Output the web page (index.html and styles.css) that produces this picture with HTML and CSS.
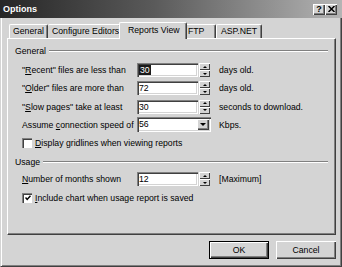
FILE: index.html
```html
<!DOCTYPE html>
<html>
<head>
<meta charset="utf-8">
<title>Options</title>
<link rel="stylesheet" href="styles.css">
</head>
<body>
<div class="window">
  <div class="titlebar">
    <span class="title">Options</span>
    <div class="caption-btns">
      <span class="cbtn cbtn-help">?</span>
      <span class="cbtn"><svg width="7" height="6" viewBox="0 0 7 6"><path d="M0.5 0 L6.5 6 M6.5 0 L0.5 6" stroke="#000" stroke-width="1.5"/></svg></span>
    </div>
  </div>
  <div class="frame">
    <div class="tabs">
      <div class="tab tab-general">General</div>
      <div class="tab tab-editors">Configure Editors</div>
      <div class="tab tab-reports active">Reports View</div>
      <div class="tab tab-ftp">FTP</div>
      <div class="tab tab-asp">ASP.NET</div>
    </div>
    <div class="panel">
      <div class="group-head"><span>General</span><span class="rule"></span></div>
      <div class="group-body">
        <div class="row">
          <span class="lbl">&quot;<u>R</u>ecent&quot; files are less than</span>
          <div class="field">
            <div class="edit"><span class="sel">30</span></div>
            <div class="spin"><span class="spin-btn"><i class="tri-up"></i></span><span class="spin-btn"><i class="tri-down"></i></span></div>
          </div>
          <span class="unit">days old.</span>
        </div>
        <div class="row">
          <span class="lbl">&quot;<u>O</u>lder&quot; files are more than</span>
          <div class="field">
            <div class="edit">72</div>
            <div class="spin"><span class="spin-btn"><i class="tri-up"></i></span><span class="spin-btn"><i class="tri-down"></i></span></div>
          </div>
          <span class="unit">days old.</span>
        </div>
        <div class="row">
          <span class="lbl">&quot;<u>S</u>low pages&quot; take at least</span>
          <div class="field">
            <div class="edit">30</div>
            <div class="spin"><span class="spin-btn"><i class="tri-up"></i></span><span class="spin-btn"><i class="tri-down"></i></span></div>
          </div>
          <span class="unit">seconds to download.</span>
        </div>
        <div class="row">
          <span class="lbl">Assume <u>c</u>onnection speed of</span>
          <div class="field">
            <div class="combo"><span class="combo-text">56</span><span class="combo-btn"><i class="tri-drop"></i></span></div>
          </div>
          <span class="unit">Kbps.</span>
        </div>
        <div class="row">
          <span class="check"></span>
          <span><u>D</u>isplay gridlines when viewing reports</span>
        </div>
      </div>
      <div class="group-head group-usage"><span>Usage</span><span class="rule"></span></div>
      <div class="group-body group-body-usage">
        <div class="row">
          <span class="lbl"><u>N</u>umber of months shown</span>
          <div class="field">
            <div class="edit">12</div>
            <div class="spin"><span class="spin-btn"><i class="tri-up"></i></span><span class="spin-btn"><i class="tri-down"></i></span></div>
          </div>
          <span class="unit">[Maximum]</span>
        </div>
        <div class="row">
          <span class="check"><svg width="6" height="6" viewBox="0 0 6 6"><path d="M0.5 2.5 L2.2 4.4 L5.5 0.8" fill="none" stroke="#000" stroke-width="1.5"/></svg></span>
          <span><u>I</u>nclude chart when usage report is saved</span>
        </div>
      </div>
    </div>
    <div class="buttons">
      <div class="btn btn-default">OK</div>
      <div class="btn">Cancel</div>
    </div>
  </div>
</div>
</body>
</html>
```

FILE: styles.css
```css
* { box-sizing: border-box; }
html, body { margin: 0; padding: 0; }
body {
  width: 342px;
  height: 267px;
  overflow: hidden;
  background: #d4d4d4;
  font-family: "Liberation Sans", Arial, sans-serif;
  font-size: 8.7px;
  color: #000;
}
u { text-decoration: underline; text-underline-offset: 1px; }

.window {
  width: 342px;
  height: 267px;
  display: flex;
  flex-direction: column;
  background: #d4d4d4;
}

.titlebar {
  height: 18px;
  flex: none;
  display: flex;
  align-items: center;
  justify-content: space-between;
  padding: 0 5px 0 3px;
  background: linear-gradient(to right, #262626 0%, #5a5a5a 45%, #b4b4b4 100%);
}
.title {
  color: #fff;
  font-weight: bold;
  font-size: 9px;
}
.caption-btns { display: flex; }
.cbtn {
  width: 12px;
  height: 11px;
  background: #d4d4d4;
  box-shadow: inset 1px 1px #fff, inset -1px -1px #404040, inset -2px -2px #808080;
  display: flex;
  align-items: center;
  justify-content: center;
  font-weight: bold;
  font-size: 9px;
  line-height: 11px;
}
.cbtn-help { padding-top: 1px; }

.frame {
  flex: 1;
  display: flex;
  flex-direction: column;
  border-left: 1px solid #d4d4d4;
  border-right: 1px solid #404040;
  border-bottom: 1px solid #404040;
  box-shadow: inset 1px 0 #fff, inset -1px -1px #808080;
  padding: 4px 5px 7px 6px;
}

.tabs {
  height: 17px;
  margin-bottom: -1px;
  padding-left: 2px;
  display: flex;
  align-items: flex-end;
  position: relative;
  z-index: 1;
}
.tab {
  height: 14px;
  margin-bottom: 1px;
  border-top: 1px solid #fff;
  border-left: 1px solid #fff;
  border-right: 1px solid #404040;
  border-radius: 2px 2px 0 0;
  box-shadow: inset -1px 0 #808080;
  padding-left: 3px;
  line-height: 13px;
  white-space: nowrap;
  background: #d4d4d4;
}
.tab-general { width: 39px; }
.tab-editors { width: 73px; padding-left: 4px; border-left: none; }
.tab-reports { width: 68px; }
.tab-ftp { width: 31px; border-left: none; padding-left: 3px; }
.tab-asp { width: 46px; padding-left: 4px; }
.tab.active {
  height: 17px;
  margin: 0 -2px;
  padding-left: 8px;
  padding-top: 1px;
  line-height: 13px;
  position: relative;
  z-index: 2;
}

.panel {
  height: 197px;
  flex: none;
  border-top: 1px solid #fff;
  border-left: 1px solid #fff;
  border-right: 1px solid #404040;
  border-bottom: 1px solid #404040;
  box-shadow: inset -1px -1px #808080;
  padding: 6px 7px 0 7px;
}

.group-head {
  height: 12px;
  display: flex;
  align-items: center;
}
.rule {
  flex: 1;
  height: 2px;
  margin-left: 3px;
  border-top: 1px solid #808080;
  border-bottom: 1px solid #fff;
}
.group-usage { margin-top: 4px; }

.group-body { padding-left: 7px; margin-top: 4px; }
.group-body-usage { margin-top: 2px; }

.row {
  height: 18.25px;
  display: flex;
  align-items: center;
  white-space: nowrap;
}
.lbl { width: 115px; flex: none; }
.field { width: 74px; flex: none; display: flex; }
.unit { margin-left: 8px; }

.edit {
  width: 61px;
  height: 14px;
  background: #fff;
  box-shadow: inset 1px 1px #808080, inset 2px 2px #404040, inset -1px -1px #fff, inset -2px -2px #d4d4d4;
  padding-left: 2px;
  line-height: 14px;
}
.sel {
  background: #1a1a1a;
  color: #fff;
  padding: 0 1px;
}

.spin {
  width: 11px;
  height: 14px;
  margin-left: 1px;
  display: flex;
  flex-direction: column;
}
.spin-btn {
  flex: 1;
  background: #d4d4d4;
  box-shadow: inset 1px 1px #fff, inset -1px -1px #404040;
  display: flex;
  align-items: center;
  justify-content: center;
}
.tri-up {
  width: 0; height: 0;
  border-left: 2px solid transparent;
  border-right: 2px solid transparent;
  border-bottom: 2px solid #000;
}
.tri-down {
  width: 0; height: 0;
  border-left: 2px solid transparent;
  border-right: 2px solid transparent;
  border-top: 2px solid #000;
}

.combo {
  width: 74px;
  height: 15px;
  background: #fff;
  box-shadow: inset 1px 1px #808080, inset 2px 2px #404040, inset -1px -1px #fff, inset -2px -2px #d4d4d4;
  display: flex;
  align-items: center;
  padding: 2px;
}
.combo-text { flex: 1; line-height: 11px; padding-left: 0; }
.combo-btn {
  width: 12px;
  height: 11px;
  background: #d4d4d4;
  box-shadow: inset 1px 1px #fff, inset -1px -1px #404040, inset -2px -2px #808080;
  display: flex;
  align-items: center;
  justify-content: center;
}
.tri-drop {
  width: 0; height: 0;
  border-left: 3px solid transparent;
  border-right: 3px solid transparent;
  border-top: 3px solid #000;
}

.check {
  width: 10px;
  height: 10px;
  flex: none;
  margin-right: 3px;
  background: #fff;
  box-shadow: inset 1px 1px #808080, inset 2px 2px #404040, inset -1px -1px #fff;
  display: flex;
  align-items: center;
  justify-content: center;
  padding: 1px 0 0 1px;
}

.buttons {
  margin-top: 6px;
  height: 18px;
  display: flex;
  justify-content: flex-end;
  gap: 7px;
}
.btn {
  width: 60px;
  height: 18px;
  background: #d4d4d4;
  box-shadow: inset 1px 1px #fff, inset -1px -1px #404040, inset -2px -2px #808080;
  text-align: center;
  line-height: 18px;
}
.btn-default {
  border: 1px solid #000;
  line-height: 16px;
}
```
